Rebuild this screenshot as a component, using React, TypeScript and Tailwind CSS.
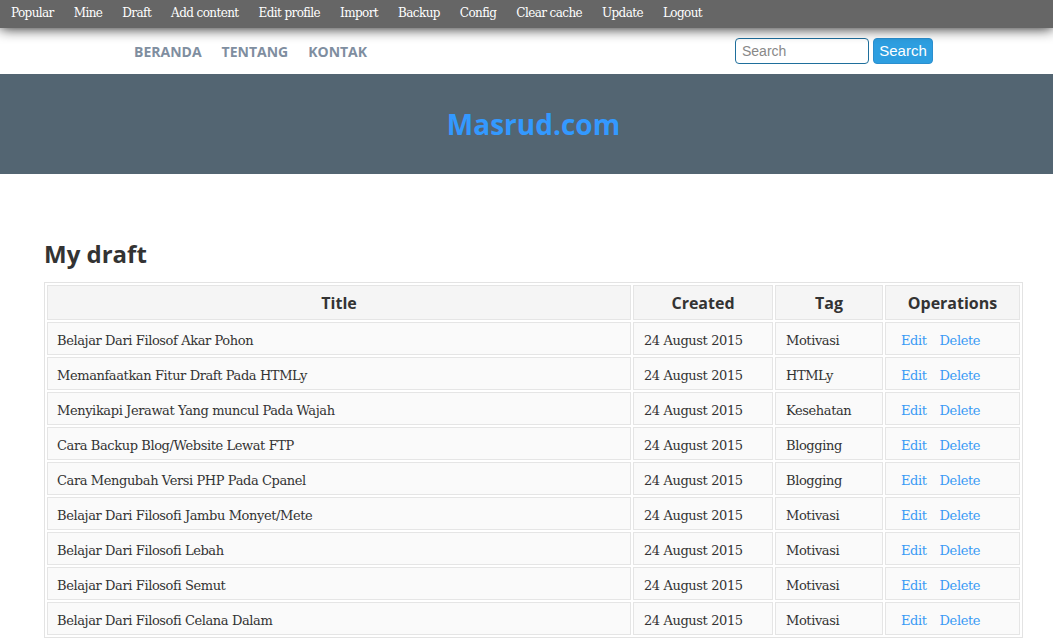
import React from "react";

const adminLinks = [
  "Popular",
  "Mine",
  "Draft",
  "Add content",
  "Edit profile",
  "Import",
  "Backup",
  "Config",
  "Clear cache",
  "Update",
  "Logout",
];

const navLinks = ["BERANDA", "TENTANG", "KONTAK"];

type Draft = {
  title: string;
  tag: string;
};

const drafts: Draft[] = [
  { title: "Belajar Dari Filosof Akar Pohon", tag: "Motivasi" },
  { title: "Memanfaatkan Fitur Draft Pada HTMLy", tag: "HTMLy" },
  { title: "Menyikapi Jerawat Yang muncul Pada Wajah", tag: "Kesehatan" },
  { title: "Cara Backup Blog/Website Lewat FTP", tag: "Blogging" },
  { title: "Cara Mengubah Versi PHP Pada Cpanel", tag: "Blogging" },
  { title: "Belajar Dari Filosofi Jambu Monyet/Mete", tag: "Motivasi" },
  { title: "Belajar Dari Filosofi Lebah", tag: "Motivasi" },
  { title: "Belajar Dari Filosofi Semut", tag: "Motivasi" },
  { title: "Belajar Dari Filosofi Celana Dalam", tag: "Motivasi" },
];

const serif = "font-['DejaVu_Serif',Georgia,serif]";
const sans = "font-['Open_Sans',sans-serif]";

const App = () => {
  return (
    <div className="min-h-[638px] bg-white text-[#333]">
      {/* admin toolbar */}
      <div
        className={`relative z-10 flex h-[28px] items-center bg-[#666] pl-[1px] shadow-[0_0_14px_rgba(0,0,0,0.95)] ${serif}`}
      >
        {adminLinks.map((link) => (
          <a
            key={link}
            href="#"
            className="px-[10px] pb-[3px] text-[12px] tracking-[-0.6px] text-white"
          >
            {link}
          </a>
        ))}
      </div>

      {/* navigation */}
      <div className="flex h-[46px] items-center bg-white">
        <nav className={`ml-[134px] flex gap-[20px] ${sans}`}>
          {navLinks.map((link) => (
            <a
              key={link}
              href="#"
              className="text-[14px] font-bold text-[#7f8ea0]"
            >
              {link}
            </a>
          ))}
        </nav>
        <form className="ml-auto mr-[120px] flex gap-[4px] font-['Liberation_Sans',Arial,sans-serif]">
          <input
            type="text"
            placeholder="Search"
            className="h-[26px] w-[134px] rounded-[4px] border border-[#1f6f9c] px-[6px] text-[14px] text-[#333] placeholder:text-[#888] outline-none"
          />
          <button
            type="button"
            className="h-[26px] w-[60px] rounded-[4px] border border-[#2b8fcf] bg-[#2d9ee0] text-[15px] text-white"
          >
            Search
          </button>
        </form>
      </div>

      {/* site header */}
      <div className="flex h-[100px] items-center justify-center bg-[#536572] pl-[14px]">
        <h1 className={`${sans} text-[28px] font-bold text-[#3399ff]`}>
          Masrud.com
        </h1>
      </div>

      {/* content */}
      <div className="px-[44px] pt-[64px]">
        <h2 className={`${sans} mb-[12px] text-[24px] leading-[32px] font-bold text-[#333]`}>
          My draft
        </h2>
        <table className="w-[979px] table-fixed border-separate border-spacing-[2px] border border-[#e3e3e3] bg-white">
          <thead>
            <tr className={`${sans} text-[16px] font-bold text-[#333]`}>
              <th className="h-[35px] w-[584px] border border-[#e5e5e5] bg-[#f5f5f5]">
                Title
              </th>
              <th className="h-[35px] w-[140px] border border-[#e5e5e5] bg-[#f5f5f5]">
                Created
              </th>
              <th className="h-[35px] w-[108px] border border-[#e5e5e5] bg-[#f5f5f5]">
                Tag
              </th>
              <th className="h-[35px] w-[135px] border border-[#e5e5e5] bg-[#f5f5f5]">
                Operations
              </th>
            </tr>
          </thead>
          <tbody className={`${serif} text-[13px] tracking-[-0.4px] text-[#333]`}>
            {drafts.map((draft) => (
              <tr key={draft.title}>
                <td className="h-[33px] border border-[#e5e5e5] bg-[#fafafa] pt-[4px] pl-[9px]">
                  {draft.title}
                </td>
                <td className="h-[33px] border border-[#e5e5e5] bg-[#fafafa] pt-[4px] pl-[10px]">
                  24 August 2015
                </td>
                <td className="h-[33px] border border-[#e5e5e5] bg-[#fafafa] pt-[4px] pl-[10px]">
                  {draft.tag}
                </td>
                <td className="h-[33px] border border-[#e5e5e5] bg-[#fafafa] pt-[4px] pl-[15px]">
                  <a href="#" className="mr-[13px] text-[#3a9bf5]">
                    Edit
                  </a>
                  <a href="#" className="text-[#3a9bf5]">
                    Delete
                  </a>
                </td>
              </tr>
            ))}
          </tbody>
        </table>
      </div>
    </div>
  );
};

export default App;
